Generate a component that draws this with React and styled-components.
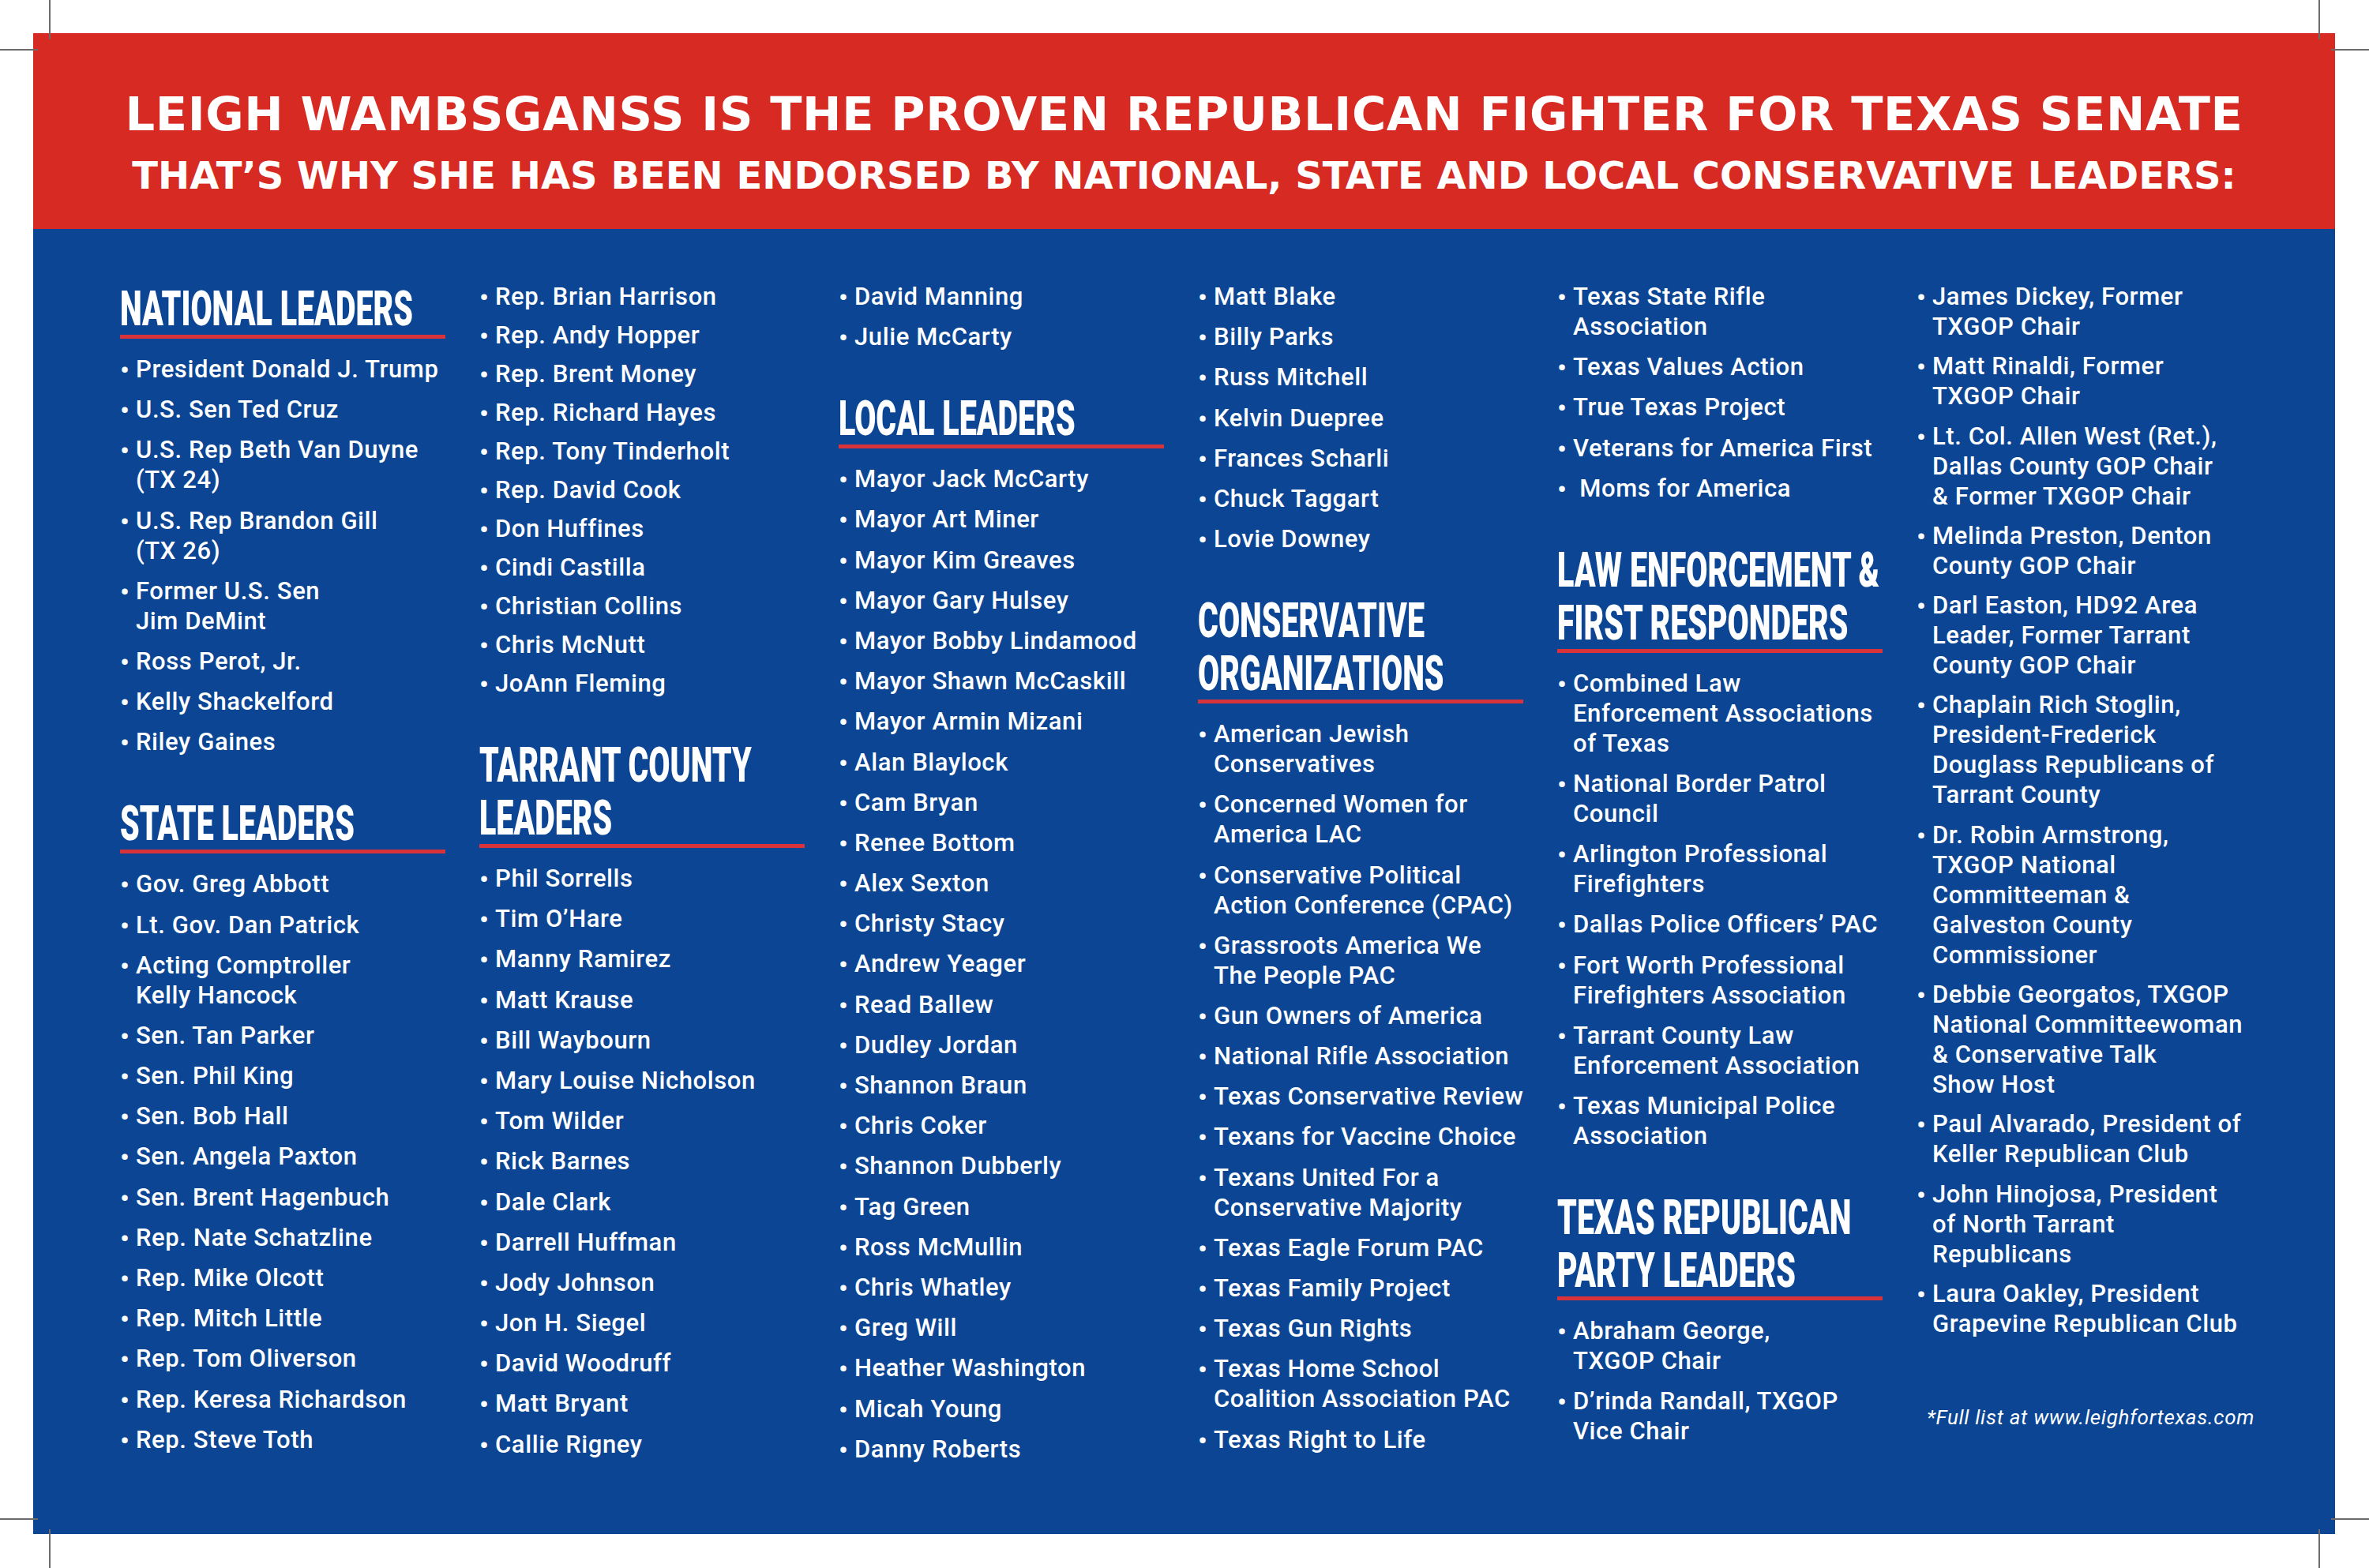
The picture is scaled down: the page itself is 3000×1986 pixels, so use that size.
import React from 'react'
import styled, { createGlobalStyle } from 'styled-components'

const GlobalStyle = createGlobalStyle`
  html, body {
    margin: 0;
    padding: 0;
    background: #ffffff;
  }
  * {
    box-sizing: border-box;
  }
`

const RED = '#d62a22'
const BLUE = '#0b4594'
const RULE = '#d8323a'

const Page = styled.div`
  position: relative;
  width: 3000px;
  height: 1986px;
  padding: 42px 43px 43px 42px;
  background: #ffffff;
`

const Panel = styled.div`
  height: 100%;
  display: flex;
  flex-direction: column;
`

const Banner = styled.header`
  height: 248px;
  padding-top: 73px;
  background: ${RED};
  color: #ffffff;
  text-align: center;
  font-family: 'DejaVu Sans', 'Liberation Sans', sans-serif;
  font-weight: 700;
  white-space: nowrap;
`

const Headline = styled.h1`
  margin: 0;
  font-size: 59px;
  line-height: 60px;
  font-weight: 700;
  letter-spacing: 0.65px;
`

const Subline = styled.h2`
  margin: 23px 0 0;
  font-size: 48px;
  line-height: 48px;
  font-weight: 700;
  letter-spacing: 0px;
`

const Board = styled.main`
  flex: 1;
  background: ${BLUE};
  padding: 67px 0 0 110px;
`

const Columns = styled.div`
  display: grid;
  grid-template-columns: repeat(6, 412px);
  column-gap: 43px;
  align-items: start;
`

const Column = styled.div`
  display: flex;
  flex-direction: column;
  gap: 50px;
`

const Section = styled.section`
  display: flex;
  flex-direction: column;
  gap: 20px;
`

const Heading = styled.h3`
  margin: 0;
  color: #ffffff;
  font-family: Roboto, 'Liberation Sans', sans-serif;
  font-weight: 900;
  font-size: 62px;
  line-height: 67px;
  border-bottom: 5px solid ${RULE};
`

const HeadLine = styled.span`
  display: block;
  white-space: nowrap;
  transform: scaleX(0.636);
  transform-origin: left center;
`

const List = styled.ul`
  margin: 0;
  padding: 0;
  list-style: none;
  display: flex;
  flex-direction: column;
  gap: ${({ $gap }) => $gap}px;
`

const Item = styled.li`
  display: flex;
  color: #ffffff;
  font-family: Roboto, 'Liberation Sans', sans-serif;
  font-weight: 500;
  font-size: 31px;
  line-height: 38px;
  letter-spacing: 0.6px;
`

const Bullet = styled.span`
  flex: none;
  width: 20px;
  font-size: 34px;
  letter-spacing: 0;
`

const Lines = styled.span`
  display: flex;
  flex-direction: column;
  white-space: nowrap;
`

const Footnote = styled.p`
  margin: 34px 0 0;
  padding-left: 13px;
  color: #ffffff;
  font-family: Roboto, 'Liberation Sans', sans-serif;
  font-style: italic;
  font-weight: 400;
  font-size: 26px;
  line-height: 30px;
  letter-spacing: 0.7px;
  white-space: nowrap;
`

const CropMark = styled.span`
  position: absolute;
  background: #6b6b6b;
  left: ${({ $x }) => $x}px;
  top: ${({ $y }) => $y}px;
  width: ${({ $w }) => $w}px;
  height: ${({ $h }) => $h}px;
`

const marks = [
  { x: 62, y: 0, w: 1.5, h: 50 },
  { x: 0, y: 62, w: 48, h: 1.5 },
  { x: 2936, y: 0, w: 1.5, h: 50 },
  { x: 2952, y: 62, w: 48, h: 1.5 },
  { x: 0, y: 1923, w: 48, h: 1.5 },
  { x: 62, y: 1937, w: 1.5, h: 49 },
  { x: 2952, y: 1923, w: 48, h: 1.5 },
  { x: 2936, y: 1937, w: 1.5, h: 49 },
]

const columns = [
  [
    {
      title: ['NATIONAL LEADERS'],
      gap: 13.2,
      items: [
        ['President Donald J. Trump'],
        ['U.S. Sen Ted Cruz'],
        ['U.S. Rep Beth Van Duyne', '(TX 24)'],
        ['U.S. Rep Brandon Gill', '(TX 26)'],
        ['Former U.S. Sen', 'Jim DeMint'],
        ['Ross Perot, Jr.'],
        ['Kelly Shackelford'],
        ['Riley Gaines'],
      ],
    },
    {
      title: ['STATE LEADERS'],
      gap: 13.2,
      items: [
        ['Gov. Greg Abbott'],
        ['Lt. Gov. Dan Patrick'],
        ['Acting Comptroller', 'Kelly Hancock'],
        ['Sen. Tan Parker'],
        ['Sen. Phil King'],
        ['Sen. Bob Hall'],
        ['Sen. Angela Paxton'],
        ['Sen. Brent Hagenbuch'],
        ['Rep. Nate Schatzline'],
        ['Rep. Mike Olcott'],
        ['Rep. Mitch Little'],
        ['Rep. Tom Oliverson'],
        ['Rep. Keresa Richardson'],
        ['Rep. Steve Toth'],
      ],
    },
  ],
  [
    {
      gap: 11,
      items: [
        ['Rep. Brian Harrison'],
        ['Rep. Andy Hopper'],
        ['Rep. Brent Money'],
        ['Rep. Richard Hayes'],
        ['Rep. Tony Tinderholt'],
        ['Rep. David Cook'],
        ['Don Huffines'],
        ['Cindi Castilla'],
        ['Christian Collins'],
        ['Chris McNutt'],
        ['JoAnn Fleming'],
      ],
    },
    {
      title: ['TARRANT COUNTY', 'LEADERS'],
      gap: 13.2,
      items: [
        ['Phil Sorrells'],
        ['Tim O\u2019Hare'],
        ['Manny Ramirez'],
        ['Matt Krause'],
        ['Bill Waybourn'],
        ['Mary Louise Nicholson'],
        ['Tom Wilder'],
        ['Rick Barnes'],
        ['Dale Clark'],
        ['Darrell Huffman'],
        ['Jody Johnson'],
        ['Jon H. Siegel'],
        ['David Woodruff'],
        ['Matt Bryant'],
        ['Callie Rigney'],
      ],
    },
  ],
  [
    {
      gap: 13.2,
      items: [['David Manning'], ['Julie McCarty']],
    },
    {
      title: ['LOCAL LEADERS'],
      gap: 13.2,
      items: [
        ['Mayor Jack McCarty'],
        ['Mayor Art Miner'],
        ['Mayor Kim Greaves'],
        ['Mayor Gary Hulsey'],
        ['Mayor Bobby Lindamood'],
        ['Mayor Shawn McCaskill'],
        ['Mayor Armin Mizani'],
        ['Alan Blaylock'],
        ['Cam Bryan'],
        ['Renee Bottom'],
        ['Alex Sexton'],
        ['Christy Stacy'],
        ['Andrew Yeager'],
        ['Read Ballew'],
        ['Dudley Jordan'],
        ['Shannon Braun'],
        ['Chris Coker'],
        ['Shannon Dubberly'],
        ['Tag Green'],
        ['Ross McMullin'],
        ['Chris Whatley'],
        ['Greg Will'],
        ['Heather Washington'],
        ['Micah Young'],
        ['Danny Roberts'],
      ],
    },
  ],
  [
    {
      gap: 13.2,
      items: [
        ['Matt Blake'],
        ['Billy Parks'],
        ['Russ Mitchell'],
        ['Kelvin Duepree'],
        ['Frances Scharli'],
        ['Chuck Taggart'],
        ['Lovie Downey'],
      ],
    },
    {
      title: ['CONSERVATIVE', 'ORGANIZATIONS'],
      gap: 13.2,
      items: [
        ['American Jewish', 'Conservatives'],
        ['Concerned Women for', 'America LAC'],
        ['Conservative Political', 'Action Conference (CPAC)'],
        ['Grassroots America We', 'The People PAC'],
        ['Gun Owners of America'],
        ['National Rifle Association'],
        ['Texas Conservative Review'],
        ['Texans for Vaccine Choice'],
        ['Texans United For a', 'Conservative Majority'],
        ['Texas Eagle Forum PAC'],
        ['Texas Family Project'],
        ['Texas Gun Rights'],
        ['Texas Home School', 'Coalition Association PAC'],
        ['Texas Right to Life'],
      ],
    },
  ],
  [
    {
      gap: 13.2,
      items: [
        ['Texas State Rifle', 'Association'],
        ['Texas Values Action'],
        ['True Texas Project'],
        ['Veterans for America First'],
        ['\u00a0Moms for America'],
      ],
    },
    {
      title: ['LAW ENFORCEMENT &', 'FIRST RESPONDERS'],
      gap: 13.2,
      items: [
        ['Combined Law', 'Enforcement Associations', 'of Texas'],
        ['National Border Patrol', 'Council'],
        ['Arlington Professional', 'Firefighters'],
        ['Dallas Police Officers\u2019 PAC'],
        ['Fort Worth Professional', 'Firefighters Association'],
        ['Tarrant County Law', 'Enforcement Association'],
        ['Texas Municipal Police', 'Association'],
      ],
    },
    {
      title: ['TEXAS REPUBLICAN', 'PARTY LEADERS'],
      gap: 13.2,
      items: [
        ['Abraham George,', 'TXGOP Chair'],
        ['D\u2019rinda Randall, TXGOP', 'Vice Chair'],
      ],
    },
  ],
  [
    {
      gap: 12.3,
      items: [
        ['James Dickey, Former', 'TXGOP Chair'],
        ['Matt Rinaldi, Former', 'TXGOP Chair'],
        ['Lt. Col. Allen West (Ret.),', 'Dallas County GOP Chair', '& Former TXGOP Chair'],
        ['Melinda Preston, Denton', 'County GOP Chair'],
        ['Darl Easton, HD92 Area', 'Leader, Former Tarrant', 'County GOP Chair'],
        ['Chaplain Rich Stoglin,', 'President-Frederick', 'Douglass Republicans of', 'Tarrant County'],
        ['Dr. Robin Armstrong,', 'TXGOP National', 'Committeeman &', 'Galveston County', 'Commissioner'],
        ['Debbie Georgatos, TXGOP', 'National Committeewoman', '& Conservative Talk', 'Show Host'],
        ['Paul Alvarado, President of', 'Keller Republican Club'],
        ['John Hinojosa, President', 'of North Tarrant', 'Republicans'],
        ['Laura Oakley, President', 'Grapevine Republican Club'],
      ],
    },
  ],
]

const EndorsementSection = ({ title, gap, items }) => (
  <Section>
    {title && (
      <Heading>
        {title.map((line) => (
          <HeadLine key={line}>{line}</HeadLine>
        ))}
      </Heading>
    )}
    <List $gap={gap}>
      {items.map((lines) => (
        <Item key={lines[0]}>
          <Bullet>•</Bullet>
          <Lines>
            {lines.map((line) => (
              <span key={line}>{line}</span>
            ))}
          </Lines>
        </Item>
      ))}
    </List>
  </Section>
)

const App = () => {
  return (
    <>
      <GlobalStyle />
      <Page>
        <Panel>
          <Banner>
            <Headline>LEIGH WAMBSGANSS IS THE PROVEN REPUBLICAN FIGHTER FOR TEXAS SENATE</Headline>
            <Subline>THAT’S WHY SHE HAS BEEN ENDORSED BY NATIONAL, STATE AND LOCAL CONSERVATIVE LEADERS:</Subline>
          </Banner>
          <Board>
            <Columns>
              {columns.map((sections, i) => (
                <Column key={i}>
                  {sections.map((section, j) => (
                    <EndorsementSection key={j} {...section} />
                  ))}
                  {i === 5 && <Footnote>*Full list at www.leighfortexas.com</Footnote>}
                </Column>
              ))}
            </Columns>
          </Board>
        </Panel>
        {marks.map((m, i) => (
          <CropMark key={i} $x={m.x} $y={m.y} $w={m.w} $h={m.h} />
        ))}
      </Page>
    </>
  )
}

export default App
